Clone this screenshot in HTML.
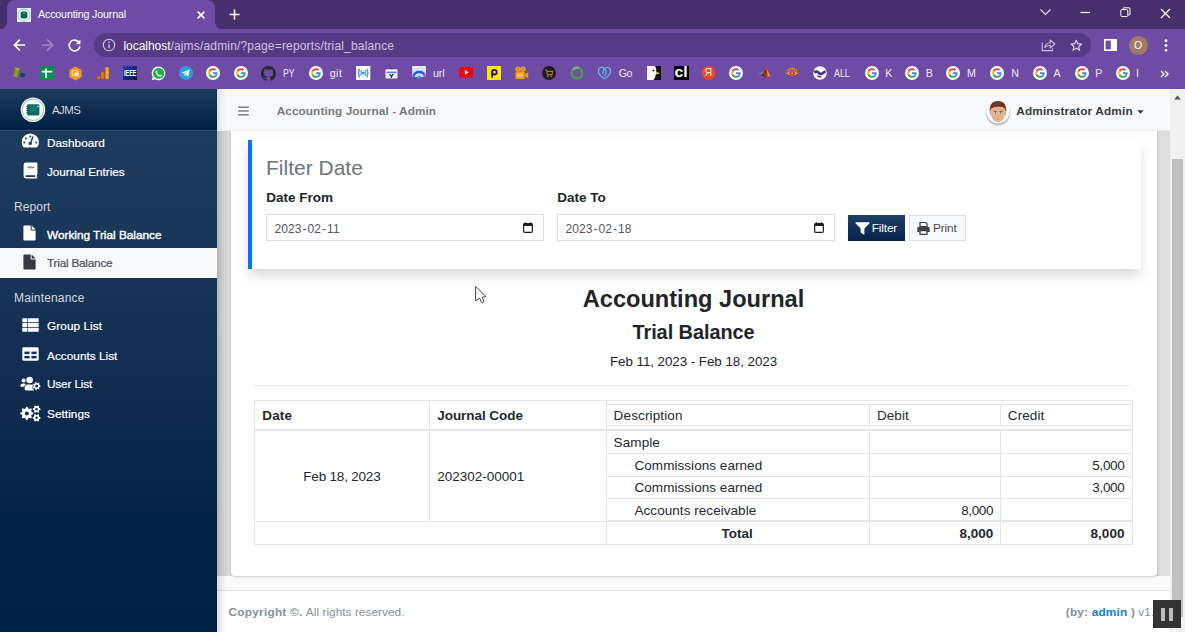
<!DOCTYPE html>
<html lang="en">
<head>
<meta charset="utf-8">
<title>Accounting Journal</title>
<style>
*{box-sizing:border-box;margin:0;padding:0}
html,body{width:1185px;height:632px;overflow:hidden;background:#fff}
body{font-family:"Liberation Sans",sans-serif;position:relative;color:#212529}
.abs{position:absolute}
svg{display:block}
/* ---------- browser chrome ---------- */
#tabstrip{left:0;top:0;width:1185px;height:30px;background:#472e6c}
#tab{left:7px;top:0;width:208px;height:30px;background:#6e4ba5;border-radius:8px 8px 0 0}
#tab:before,#tab:after{content:"";position:absolute;bottom:0;width:8px;height:8px;background:radial-gradient(circle at 0 0,transparent 7.5px,#6e4ba5 8px)}
#tab:before{left:-8px}
#tab:after{right:-8px;background:radial-gradient(circle at 100% 0,transparent 7.5px,#6e4ba5 8px)}
#tabtitle{left:38px;top:7.2px;font-size:10.7px;color:#fff;letter-spacing:-.16px;white-space:nowrap;line-height:15px}
#toolbar{left:0;top:29px;width:1185px;height:60px;background:#6e4ba5}
#pill{left:94px;top:33px;width:997px;height:24px;border-radius:12px;background:#573a85}
#url{left:123.5px;top:38.7px;font-size:12px;line-height:15px;color:#cfc3e6;white-space:nowrap;letter-spacing:-.05px}
#url b{color:#fff;font-weight:400}
.bm{top:65.6px;font-size:10.7px;line-height:15px;color:#f1ecf9;white-space:nowrap;transform-origin:0 50%}
/* ---------- page ---------- */
#sidebar{left:0;top:89px;width:217px;height:543px;background:linear-gradient(180deg,#1f3d5e 0%,#193658 30%,#0d2a4c 62%,#032247 80%,#001f44 100%)}
#brand{left:0;top:89px;width:217px;height:42px;background:linear-gradient(180deg,#1e3c5c 0%,#0e2b4f 55%,#001f45 100%);border-bottom:1px solid #3c526c}
#content{left:217px;top:131px;width:953px;height:445px;background:#dedede}
#navbar{left:217px;top:89px;width:953px;height:42px;background:linear-gradient(90deg,#dcdddf 0,#f1f2f3 5px,#f8f9fa 10px);border-bottom:1px solid #e9ebee;box-shadow:0 1px 2px rgba(0,0,0,.04)}

.sb{left:47px;font-size:11.8px;line-height:16px;color:#fff;white-space:nowrap;-webkit-text-stroke:.2px currentColor}
.sh{left:14px;font-size:12px;line-height:16px;color:#d3d9e0;white-space:nowrap}
#active{left:0;top:248px;width:217px;height:30px;background:#f8f9fa}

#card{left:231px;top:131px;width:926px;height:445px;background:#fff;border-radius:0 0 4px 4px;box-shadow:0 1px 2px rgba(0,0,0,.18)}
#leftshade{left:217px;top:131px;width:14px;height:445px;background:linear-gradient(90deg,#b3b3b5 0%,#c9c9ca 35%,#d6d6d7 70%,#dcdcdc 100%)}
#rightshade{left:1157px;top:131px;width:13px;height:445px;background:linear-gradient(90deg,#d3d3d3 0%,#dedede 22%,#dedede 100%)}
#below{left:217px;top:576px;width:953px;height:14px;background:#fafafb}
#footer{left:217px;top:590px;width:953px;height:42px;background:#fff;border-top:1px solid #e3e5e8}
#callout{left:248px;top:140px;width:893px;height:129px;background:#fff;border-left:4.5px solid #0a72f7;border-radius:0;box-shadow:0 7px 12px -1px rgba(0,0,0,.16)}
.t{white-space:nowrap;line-height:16px}
.inp{top:214px;width:278px;height:27px;border:1px solid #d9dde1;border-radius:0;background:#fff}
.ln{background:#e3e6e9}
.tx{font-size:13.5px;line-height:16px;white-space:nowrap;color:#24292e;margin-left:-.4px}
</style>
</head>
<body>
<!-- CHROME -->
<div id="tabstrip" class="abs"></div>
<div id="toolbar" class="abs"></div>
<div id="tab" class="abs"></div>
<div id="tabtitle" class="abs">Accounting Journal</div>
<div id="pill" class="abs"></div>
<div id="url" class="abs"><b>localhost</b><span style="letter-spacing:.17px">/ajms/admin/?page=reports/trial_balance</span></div>
<!-- favicon -->
<svg class="abs" style="left:17px;top:8px" width="14" height="14" viewBox="0 0 14 14"><rect width="14" height="14" fill="#e9f3f1"/><circle cx="7" cy="7" r="5.9" fill="#fff" stroke="#6dbdb3" stroke-width=".7"/><rect x="3.6" y="3.6" width="6.8" height="6.8" rx="1.6" fill="#0d5f58"/><rect x="5" y="4.6" width="4" height="1" fill="#2fa79a"/></svg>
<!-- tab close -->
<svg class="abs" style="left:196px;top:9.5px" width="10" height="10" viewBox="0 0 10 10"><path d="M1.6 1.6 L8.4 8.4 M8.4 1.6 L1.6 8.4" stroke="#fff" stroke-width="1.5" fill="none"/></svg>
<!-- new tab -->
<svg class="abs" style="left:228.5px;top:9px" width="11" height="11" viewBox="0 0 11 11"><path d="M5.5 .5 V10.5 M.5 5.5 H10.5" stroke="#fff" stroke-width="1.6" fill="none"/></svg>
<!-- window controls -->
<svg class="abs" style="left:1039px;top:7px" width="13" height="10" viewBox="0 0 13 10"><path d="M1.5 2.5 L6.5 7.5 L11.5 2.5" stroke="#e8e0f3" stroke-width="1.1" fill="none"/></svg>
<svg class="abs" style="left:1080px;top:11px" width="11" height="3" viewBox="0 0 11 3"><path d="M.5 1.5 H10" stroke="#fff" stroke-width="1.2"/></svg>
<svg class="abs" style="left:1120px;top:7px" width="11" height="11" viewBox="0 0 11 11"><rect x=".8" y="2.6" width="7" height="7" rx="1.2" fill="none" stroke="#fff" stroke-width="1"/><path d="M3 2.4 V1.8 Q3 .8 4 .8 H9 Q10 .8 10 1.8 V7 Q10 8 9 8 H8.2" fill="none" stroke="#fff" stroke-width="1"/></svg>
<svg class="abs" style="left:1160px;top:7.5px" width="11" height="11" viewBox="0 0 11 11"><path d="M1 1 L10 10 M10 1 L1 10" stroke="#fff" stroke-width="1.2" fill="none"/></svg>
<!-- back / forward / reload -->
<svg class="abs" style="left:13px;top:38px" width="13" height="14" viewBox="0 0 13 14"><path d="M12.2 7 H1.8 M6.8 1.6 L1.4 7 L6.8 12.4" stroke="#fff" stroke-width="1.7" fill="none"/></svg>
<svg class="abs" style="left:41px;top:38px" width="13" height="14" viewBox="0 0 13 14"><path d="M.8 7 H11.2 M6.2 1.6 L11.6 7 L6.2 12.4" stroke="#9f88c9" stroke-width="1.7" fill="none"/></svg>
<svg class="abs" style="left:67px;top:37.5px" width="15" height="15" viewBox="0 0 15 15"><path d="M12.2 4.6 A5.4 5.4 0 1 0 12.9 8.4" stroke="#fff" stroke-width="1.7" fill="none"/><path d="M13.4 1.4 V6.2 H8.6 Z" fill="#fff"/></svg>
<!-- info -->
<svg class="abs" style="left:102px;top:38px" width="14" height="14" viewBox="0 0 14 14"><circle cx="7" cy="7" r="5.7" fill="none" stroke="#d5c9ea" stroke-width="1.1"/><path d="M7 6.2 V10.2" stroke="#d5c9ea" stroke-width="1.3"/><circle cx="7" cy="4.2" r=".8" fill="#d5c9ea"/></svg>
<!-- share -->
<svg class="abs" style="left:1041px;top:38px" width="15" height="14" viewBox="0 0 15 14"><path d="M1.2 4.5 V12.6 H11.6 V10.4" fill="none" stroke="#cbbfe2" stroke-width="1.1"/><path d="M3.8 9.6 Q4.6 5 9.2 4.8 V2 L13.8 6 L9.2 10 V7.2 Q6 7.2 3.8 9.6 Z" fill="none" stroke="#cbbfe2" stroke-width="1.1" stroke-linejoin="round"/></svg>
<!-- star -->
<svg class="abs" style="left:1069.8px;top:38.8px" width="12.6" height="12.6" viewBox="0 0 14 14"><path d="M7 1.3 L8.7 5.2 L12.9 5.6 L9.7 8.4 L10.7 12.6 L7 10.4 L3.3 12.6 L4.3 8.4 L1.1 5.6 L5.3 5.2 Z" fill="none" stroke="#ddd3ee" stroke-width="1.3" stroke-linejoin="round"/></svg>
<!-- side panel -->
<svg class="abs" style="left:1104px;top:39px" width="13" height="12" viewBox="0 0 13 12"><rect x=".8" y=".8" width="11.4" height="10.4" fill="none" stroke="#fff" stroke-width="1.6"/><rect x="6.8" y=".8" width="5.4" height="10.4" fill="#fff"/></svg>
<!-- profile -->
<div class="abs" style="left:1128.5px;top:35.5px;width:19px;height:19px;border-radius:50%;background:#a07b68;color:#fff;font-size:10.5px;line-height:19px;text-align:center">O</div>
<!-- menu -->
<svg class="abs" style="left:1164px;top:39px" width="4" height="13" viewBox="0 0 4 13"><circle cx="2" cy="1.7" r="1.4" fill="#fff"/><circle cx="2" cy="6.5" r="1.4" fill="#fff"/><circle cx="2" cy="11.3" r="1.4" fill="#fff"/></svg>

<svg class="abs" style="left:12px;top:66px" width="15" height="14" viewBox="0 0 15 14"><path d="M3.4 1.4 L7.6 2.4 L5.4 11.6 L1.2 10.6 Z" fill="#8d9d14"/><path d="M3.4 1.4 L7.6 2.4 L7.2 4 L3 3 Z" fill="#a5b722"/><path d="M9.2 6.6 L13.4 7.8 L12.2 11.8 L8 10.6 Z" fill="#104a5a"/></svg>
<svg class="abs" style="left:40px;top:66px" width="14" height="14" viewBox="0 0 14 14"><rect width="14" height="14" rx=".6" fill="#0e8c50"/><path d="M6 2.4 V12 M1.8 5.6 H12.2" stroke="#e9fff3" stroke-width="1.9"/></svg>
<svg class="abs" style="left:68px;top:65.5px" width="15" height="15" viewBox="0 0 15 15"><path d="M7.5 .6 L13.6 4 V11 L7.5 14.4 L1.4 11 V4 Z" fill="#f29a1f"/><rect x="4.2" y="4.6" width="5.6" height="4.8" rx=".8" fill="none" stroke="#fde6c0" stroke-width="1"/><rect x="6.4" y="6.6" width="4.2" height="3.8" rx=".6" fill="#fde6c0"/></svg>
<svg class="abs" style="left:96px;top:66px" width="14" height="14" viewBox="0 0 14 14"><rect x="9.4" y=".8" width="3.4" height="12.4" rx="1.7" fill="#f9ab00"/><rect x="5" y="5.4" width="3.2" height="7.8" rx="1.6" fill="#e37400"/><circle cx="2.6" cy="11.6" r="1.6" fill="#e37400"/></svg>
<svg class="abs" style="left:122.5px;top:66px" width="14.5" height="14" viewBox="0 0 14.5 14"><defs><linearGradient id="ieeeg" x1="0" y1="0" x2="1" y2="1"><stop offset="0" stop-color="#1b43b4"/><stop offset=".55" stop-color="#0d2480"/><stop offset="1" stop-color="#050d48"/></linearGradient></defs><rect width="14.5" height="14" fill="url(#ieeeg)"/><text x="1" y="9.8" font-family="Liberation Sans, sans-serif" font-size="8.6" font-weight="700" fill="#fff" textLength="12.5" lengthAdjust="spacingAndGlyphs">IEEE</text></svg>
<svg class="abs" style="left:150.5px;top:65.5px" width="15" height="15" viewBox="0 0 15 15"><path d="M7.6 .6 A6.8 6.8 0 1 1 4 13.2 L.7 14.3 L1.8 11 A6.8 6.8 0 0 1 7.6 .6 Z" fill="#fff"/><circle cx="7.6" cy="7.4" r="5.6" fill="#1fb141"/><path d="M5.6 4.2 L6.6 6 L6 6.9 Q6.8 8.4 8.4 9.1 L9.2 8.4 L11 9.3 Q10.8 10.8 9.2 10.7 Q5.4 10 4.6 6 Q4.5 4.7 5.6 4.2 Z" fill="#fff"/></svg>
<svg class="abs" style="left:178.5px;top:66px" width="14" height="14" viewBox="0 0 14 14"><circle cx="7" cy="7" r="7" fill="#2aa1de"/><path d="M2.6 6.8 L10.8 3.6 L9.4 10.6 L6.8 8.8 L5.6 10 L5.4 8 L9 5 L4.6 7.6 Z" fill="#fff"/></svg>
<svg class="abs" style="left:206.2px;top:66.2px" width="14" height="14" viewBox="0 0 48 48"><circle cx="24" cy="24" r="24" fill="#fff"/><g transform="translate(7.5 7.5) scale(.6875)"><path fill="#EA4335" d="M24 9.5c3.54 0 6.71 1.22 9.21 3.6l6.85-6.85C35.9 2.38 30.47 0 24 0 14.62 0 6.51 5.38 2.56 13.22l7.98 6.19C12.43 13.72 17.74 9.5 24 9.5z"/><path fill="#4285F4" d="M46.98 24.55c0-1.57-.15-3.09-.38-4.55H24v9.02h12.94c-.58 2.96-2.26 5.48-4.78 7.18l7.73 6c4.51-4.18 7.09-10.36 7.09-17.65z"/><path fill="#FBBC05" d="M10.53 28.59c-.48-1.45-.76-2.99-.76-4.59s.27-3.14.76-4.59l-7.98-6.19C.92 16.46 0 20.12 0 24c0 3.88.92 7.54 2.56 10.78l7.97-6.19z"/><path fill="#34A853" d="M24 48c6.48 0 11.93-2.13 15.89-5.81l-7.73-6c-2.15 1.45-4.92 2.3-8.16 2.3-6.26 0-11.57-4.22-13.47-9.91l-7.98 6.19C6.51 42.62 14.62 48 24 48z"/></g></svg>
<svg class="abs" style="left:233.8px;top:66.2px" width="14" height="14" viewBox="0 0 48 48"><circle cx="24" cy="24" r="24" fill="#fff"/><g transform="translate(7.5 7.5) scale(.6875)"><path fill="#EA4335" d="M24 9.5c3.54 0 6.71 1.22 9.21 3.6l6.85-6.85C35.9 2.38 30.47 0 24 0 14.62 0 6.51 5.38 2.56 13.22l7.98 6.19C12.43 13.72 17.74 9.5 24 9.5z"/><path fill="#4285F4" d="M46.98 24.55c0-1.57-.15-3.09-.38-4.55H24v9.02h12.94c-.58 2.96-2.26 5.48-4.78 7.18l7.73 6c4.51-4.18 7.09-10.36 7.09-17.65z"/><path fill="#FBBC05" d="M10.53 28.59c-.48-1.45-.76-2.99-.76-4.59s.27-3.14.76-4.59l-7.98-6.19C.92 16.46 0 20.12 0 24c0 3.88.92 7.54 2.56 10.78l7.97-6.19z"/><path fill="#34A853" d="M24 48c6.48 0 11.93-2.13 15.89-5.81l-7.73-6c-2.15 1.45-4.92 2.3-8.16 2.3-6.26 0-11.57-4.22-13.47-9.91l-7.98 6.19C6.51 42.62 14.62 48 24 48z"/></g></svg>
<svg class="abs" style="left:261px;top:65.5px" width="15" height="15" viewBox="0 0 16 16"><path fill="#24292e" d="M8 0C3.58 0 0 3.58 0 8c0 3.54 2.29 6.53 5.47 7.59.4.07.55-.17.55-.38 0-.19-.01-.82-.01-1.49-2.01.37-2.53-.49-2.69-.94-.09-.23-.48-.94-.82-1.13-.28-.15-.68-.52-.01-.53.63-.01 1.08.58 1.23.82.72 1.21 1.87.87 2.33.66.07-.52.28-.87.51-1.07-1.78-.2-3.64-.89-3.64-3.95 0-.87.31-1.59.82-2.15-.08-.2-.36-1.02.08-2.12 0 0 .67-.21 2.2.82.64-.18 1.32-.27 2-.27s1.36.09 2 .27c1.53-1.04 2.2-.82 2.2-.82.44 1.1.16 1.92.08 2.12.51.56.82 1.27.82 2.15 0 3.07-1.87 3.75-3.65 3.95.29.25.54.73.54 1.48 0 1.07-.01 1.93-.01 2.2 0 .21.15.46.55.38A8.01 8.01 0 0 0 16 8c0-4.42-3.58-8-8-8z"/></svg>
<div class="bm abs" style="left:283px;transform:scaleX(.81)">PY</div>
<svg class="abs" style="left:308.8px;top:66.2px" width="14" height="14" viewBox="0 0 48 48"><circle cx="24" cy="24" r="24" fill="#fff"/><g transform="translate(7.5 7.5) scale(.6875)"><path fill="#EA4335" d="M24 9.5c3.54 0 6.71 1.22 9.21 3.6l6.85-6.85C35.9 2.38 30.47 0 24 0 14.62 0 6.51 5.38 2.56 13.22l7.98 6.19C12.43 13.72 17.74 9.5 24 9.5z"/><path fill="#4285F4" d="M46.98 24.55c0-1.57-.15-3.09-.38-4.55H24v9.02h12.94c-.58 2.96-2.26 5.48-4.78 7.18l7.73 6c4.51-4.18 7.09-10.36 7.09-17.65z"/><path fill="#FBBC05" d="M10.53 28.59c-.48-1.45-.76-2.99-.76-4.59s.27-3.14.76-4.59l-7.98-6.19C.92 16.46 0 20.12 0 24c0 3.88.92 7.54 2.56 10.78l7.97-6.19z"/><path fill="#34A853" d="M24 48c6.48 0 11.93-2.13 15.89-5.81l-7.73-6c-2.15 1.45-4.92 2.3-8.16 2.3-6.26 0-11.57-4.22-13.47-9.91l-7.98 6.19C6.51 42.62 14.62 48 24 48z"/></g></svg>
<div class="bm abs" style="left:329.7px;letter-spacing:.45px">git</div>
<svg class="abs" style="left:356.3px;top:65.9px" width="14.4" height="14.2" viewBox="0 0 14 14"><rect width="14" height="14" fill="#fff"/><path d="M3.2 2.6 Q1.6 7 3.2 11.4 M10.8 2.6 Q12.4 7 10.8 11.4" fill="none" stroke="#3f9be6" stroke-width="1.5"/><path d="M4.9 4 V10 M9.1 4 V10" stroke="#3f9be6" stroke-width="1.1"/><rect x="5.6" y="5.6" width="2.8" height="2.8" rx=".8" fill="#3f9be6"/></svg>
<svg class="abs" style="left:385px;top:67.6px" width="13" height="11" viewBox="0 0 13 11"><rect x="4.8" y="0" width="3" height="1.6" rx=".5" fill="#3a3550"/><rect x=".5" y="1.2" width="12" height="9.4" rx="1" fill="#f6f4fb"/><rect x="1.6" y="3.6" width="9.8" height="1.5" fill="#4f7de0"/><path d="M4 6 H5.6 L6.5 7.6 L7.4 6 H9 L7.2 8.6 V10 H5.8 V8.6 Z" fill="#2c2a3a"/></svg>
<svg class="abs" style="left:412px;top:65.8px" width="14.5" height="13" viewBox="0 0 14.5 13"><rect x=".2" y=".2" width="13.8" height="10.8" rx=".8" fill="#d9e4fb"/><rect x=".2" y=".2" width="13.8" height="1.6" fill="#eef3fd"/><path d="M1.4 10.8 A5.9 5.9 0 0 1 13 10.8" fill="none" stroke="#1f5cf0" stroke-width="2.3"/><path d="M12 7.8 A5.9 5.9 0 0 1 13 10.8" fill="none" stroke="#c04de0" stroke-width="2.3"/><circle cx="7.2" cy="11.2" r="1.7" fill="#3a8cff"/></svg>
<div class="bm abs" style="left:433px;letter-spacing:-.1px">url</div>
<svg class="abs" style="left:458.6px;top:67px" width="14.6" height="10.6" viewBox="0 0 15 11"><rect width="15" height="11" rx="3" fill="#f00"/><path d="M6 3 L10 5.5 L6 8 Z" fill="#fff"/></svg>
<svg class="abs" style="left:487px;top:66px" width="14" height="14" viewBox="0 0 14 14"><rect width="14" height="14" fill="#ffe600"/><circle cx="7.4" cy="6.2" r="2.3" fill="none" stroke="#111" stroke-width="1.7"/><path d="M5.2 5 V11.6" stroke="#111" stroke-width="1.7"/></svg>
<svg class="abs" style="left:514px;top:66px" width="15" height="14" viewBox="0 0 15 14"><circle cx="4" cy="3.2" r="2" fill="#c98a3a" stroke="#f5a623" stroke-width="1.2"/><circle cx="9" cy="3.2" r="2" fill="#c98a3a" stroke="#f5a623" stroke-width="1.2"/><rect x="1.4" y="5.6" width="9.4" height="7.4" rx="1" fill="#f39c12"/><path d="M10.8 8.4 L14.2 6.2 V12.2 L10.8 10.2 Z" fill="#f39c12"/><rect x="3" y="7.6" width="6" height="3.2" fill="#f7c36a"/></svg>
<svg class="abs" style="left:541.5px;top:66px" width="14" height="14" viewBox="0 0 14 14"><circle cx="7" cy="7" r="7" fill="#1f1d1d"/><path d="M3 4 H4.4 L5.4 8.6 H10 L10.8 5.4 H5" fill="none" stroke="#a9793d" stroke-width="1.1"/><circle cx="6" cy="10.4" r=".9" fill="#a9793d"/><circle cx="9.4" cy="10.4" r=".9" fill="#a9793d"/></svg>
<svg class="abs" style="left:570px;top:66px" width="14" height="14" viewBox="0 0 14 14"><circle cx="7" cy="7" r="5.4" fill="#74509f" stroke="#43a052" stroke-width="2.3"/><path d="M3 3.4 A5.4 5.4 0 0 1 9 1.9" fill="none" stroke="#6dbb7a" stroke-width="2.3"/></svg>
<svg class="abs" style="left:597px;top:66px" width="15" height="14" viewBox="0 0 15 14"><path d="M7.4 12.8 Q.8 8.6 1.4 4.4 Q2 1.2 5.2 1.4 Q8.2 2 9 5.6 Q9.4 8.6 7.4 10" fill="none" stroke="#5cbcea" stroke-width="1.3"/><path d="M7.4 12.8 Q14.2 8.6 13.6 4.4 Q13 1.2 9.8 1.4 Q7.2 2 6.2 4.6 Q5.6 6.6 6.4 8" fill="none" stroke="#5cbcea" stroke-width="1.3"/></svg>
<div class="bm abs" style="left:618.7px;letter-spacing:-.5px">Go</div>
<svg class="abs" style="left:646.5px;top:66px" width="14" height="14" viewBox="0 0 14 14"><rect width="14" height="14" fill="#111"/><path d="M0 0 H8 Q10 3 9 5.6 L12.6 7.6 L8.6 8.6 Q9 11.6 6.6 14 H0 Z" fill="#fff"/><path d="M9 5.6 L13 7.4 L9 8.2 Z" fill="#f0a21b"/><circle cx="6.4" cy="4.6" r=".9" fill="#111"/></svg>
<div class="abs" style="left:674px;top:66px;width:14.5px;height:14px;background:#050505;overflow:hidden"><span style="display:block;width:20px;margin-left:-2.75px;color:#fff;font-size:15.5px;line-height:12.5px;font-weight:700;text-align:center;transform:scaleX(1.02)">cl</span></div>
<div class="abs" style="left:701.6px;top:66.3px;width:13.6px;height:13.6px;border-radius:50%;background:#f5451f;color:#fff;font-size:10.5px;line-height:13.6px;text-align:center">Я</div>
<svg class="abs" style="left:729.4px;top:66.2px" width="14" height="14" viewBox="0 0 48 48"><circle cx="24" cy="24" r="24" fill="#fff"/><g transform="translate(7.5 7.5) scale(.6875)"><path fill="#EA4335" d="M24 9.5c3.54 0 6.71 1.22 9.21 3.6l6.85-6.85C35.9 2.38 30.47 0 24 0 14.62 0 6.51 5.38 2.56 13.22l7.98 6.19C12.43 13.72 17.74 9.5 24 9.5z"/><path fill="#4285F4" d="M46.98 24.55c0-1.57-.15-3.09-.38-4.55H24v9.02h12.94c-.58 2.96-2.26 5.48-4.78 7.18l7.73 6c4.51-4.18 7.09-10.36 7.09-17.65z"/><path fill="#FBBC05" d="M10.53 28.59c-.48-1.45-.76-2.99-.76-4.59s.27-3.14.76-4.59l-7.98-6.19C.92 16.46 0 20.12 0 24c0 3.88.92 7.54 2.56 10.78l7.97-6.19z"/><path fill="#34A853" d="M24 48c6.48 0 11.93-2.13 15.89-5.81l-7.73-6c-2.15 1.45-4.92 2.3-8.16 2.3-6.26 0-11.57-4.22-13.47-9.91l-7.98 6.19C6.51 42.62 14.62 48 24 48z"/></g></svg>
<svg class="abs" style="left:757.6px;top:67.2px" width="13" height="11.2" viewBox="0 0 13 11.2"><path d="M.4 6.4 L4 4.8 L5.6 6.2 L3 8 Z" fill="#3f8bd6"/><path d="M4 4.8 Q6.4 3.2 8.2 .3 Q9.4 3.4 12.4 10 Q10.4 8.8 8.2 10.9 Q7 9 5.6 6.2 Z" fill="#b8431a"/><path d="M8.2 .3 Q9.4 3.4 12.4 10 Q10.8 9 9.6 9.4 Q9.4 4.6 8.2 .3 Z" fill="#f49b28"/><path d="M5.6 6.2 Q7 9 8.2 10.9 Q6.6 9.6 3 8 Z" fill="#5e2410"/><path d="M6.2 4.6 Q7.6 3.4 8.2 1.6 Q8.6 5 8.6 8.8 Q7.4 7.4 6.2 4.6 Z" fill="#3a1a10" opacity=".55"/></svg>
<svg class="abs" style="left:784.8px;top:67px" width="14.4" height="10.6" viewBox="0 0 15 11"><path d="M2.4 2.6 L3.8 4.6 M5 .8 L5.8 3.4 M7.5 .2 V3 M10 .8 L9.2 3.4 M12.6 2.6 L11.2 4.6" stroke="#f0851c" stroke-width="1.5"/><path d="M.5 6.6 Q7.5 1.2 14.5 6.6 Q7.5 11.6 .5 6.6 Z" fill="#f28c1e"/><ellipse cx="7.5" cy="6.5" rx="2.7" ry="2.2" fill="#b33a12"/><circle cx="7.5" cy="6.5" r="1" fill="#f7b04a"/></svg>
<svg class="abs" style="left:812.7px;top:66.2px" width="14" height="14" viewBox="0 0 14 14"><circle cx="7" cy="7" r="6.8" fill="#fff"/><path d="M1.2 6.6 Q3.6 4.6 5.6 6.6 Q7.2 8.6 9.2 7.6 Q10.6 6 12.6 5.4" fill="none" stroke="#4b3386" stroke-width="2.6"/><path d="M4.6 9.6 Q6 11.4 8.4 10.4" fill="none" stroke="#4b3386" stroke-width="1.6"/></svg>
<div class="bm abs" style="left:834px;transform:scaleX(.83)">ALL</div>
<svg class="abs" style="left:864.8px;top:66.2px" width="14" height="14" viewBox="0 0 48 48"><circle cx="24" cy="24" r="24" fill="#fff"/><g transform="translate(7.5 7.5) scale(.6875)"><path fill="#EA4335" d="M24 9.5c3.54 0 6.71 1.22 9.21 3.6l6.85-6.85C35.9 2.38 30.47 0 24 0 14.62 0 6.51 5.38 2.56 13.22l7.98 6.19C12.43 13.72 17.74 9.5 24 9.5z"/><path fill="#4285F4" d="M46.98 24.55c0-1.57-.15-3.09-.38-4.55H24v9.02h12.94c-.58 2.96-2.26 5.48-4.78 7.18l7.73 6c4.51-4.18 7.09-10.36 7.09-17.65z"/><path fill="#FBBC05" d="M10.53 28.59c-.48-1.45-.76-2.99-.76-4.59s.27-3.14.76-4.59l-7.98-6.19C.92 16.46 0 20.12 0 24c0 3.88.92 7.54 2.56 10.78l7.97-6.19z"/><path fill="#34A853" d="M24 48c6.48 0 11.93-2.13 15.89-5.81l-7.73-6c-2.15 1.45-4.92 2.3-8.16 2.3-6.26 0-11.57-4.22-13.47-9.91l-7.98 6.19C6.51 42.62 14.62 48 24 48z"/></g></svg>
<div class="bm abs" style="left:885.3px;letter-spacing:0px">K</div>
<svg class="abs" style="left:905.3px;top:66.2px" width="14" height="14" viewBox="0 0 48 48"><circle cx="24" cy="24" r="24" fill="#fff"/><g transform="translate(7.5 7.5) scale(.6875)"><path fill="#EA4335" d="M24 9.5c3.54 0 6.71 1.22 9.21 3.6l6.85-6.85C35.9 2.38 30.47 0 24 0 14.62 0 6.51 5.38 2.56 13.22l7.98 6.19C12.43 13.72 17.74 9.5 24 9.5z"/><path fill="#4285F4" d="M46.98 24.55c0-1.57-.15-3.09-.38-4.55H24v9.02h12.94c-.58 2.96-2.26 5.48-4.78 7.18l7.73 6c4.51-4.18 7.09-10.36 7.09-17.65z"/><path fill="#FBBC05" d="M10.53 28.59c-.48-1.45-.76-2.99-.76-4.59s.27-3.14.76-4.59l-7.98-6.19C.92 16.46 0 20.12 0 24c0 3.88.92 7.54 2.56 10.78l7.97-6.19z"/><path fill="#34A853" d="M24 48c6.48 0 11.93-2.13 15.89-5.81l-7.73-6c-2.15 1.45-4.92 2.3-8.16 2.3-6.26 0-11.57-4.22-13.47-9.91l-7.98 6.19C6.51 42.62 14.62 48 24 48z"/></g></svg>
<div class="bm abs" style="left:925.8px;letter-spacing:0px">B</div>
<svg class="abs" style="left:946.4px;top:66.2px" width="14" height="14" viewBox="0 0 48 48"><circle cx="24" cy="24" r="24" fill="#fff"/><g transform="translate(7.5 7.5) scale(.6875)"><path fill="#EA4335" d="M24 9.5c3.54 0 6.71 1.22 9.21 3.6l6.85-6.85C35.9 2.38 30.47 0 24 0 14.62 0 6.51 5.38 2.56 13.22l7.98 6.19C12.43 13.72 17.74 9.5 24 9.5z"/><path fill="#4285F4" d="M46.98 24.55c0-1.57-.15-3.09-.38-4.55H24v9.02h12.94c-.58 2.96-2.26 5.48-4.78 7.18l7.73 6c4.51-4.18 7.09-10.36 7.09-17.65z"/><path fill="#FBBC05" d="M10.53 28.59c-.48-1.45-.76-2.99-.76-4.59s.27-3.14.76-4.59l-7.98-6.19C.92 16.46 0 20.12 0 24c0 3.88.92 7.54 2.56 10.78l7.97-6.19z"/><path fill="#34A853" d="M24 48c6.48 0 11.93-2.13 15.89-5.81l-7.73-6c-2.15 1.45-4.92 2.3-8.16 2.3-6.26 0-11.57-4.22-13.47-9.91l-7.98 6.19C6.51 42.62 14.62 48 24 48z"/></g></svg>
<div class="bm abs" style="left:967px;letter-spacing:0px">M</div>
<svg class="abs" style="left:990.2px;top:66.2px" width="14" height="14" viewBox="0 0 48 48"><circle cx="24" cy="24" r="24" fill="#fff"/><g transform="translate(7.5 7.5) scale(.6875)"><path fill="#EA4335" d="M24 9.5c3.54 0 6.71 1.22 9.21 3.6l6.85-6.85C35.9 2.38 30.47 0 24 0 14.62 0 6.51 5.38 2.56 13.22l7.98 6.19C12.43 13.72 17.74 9.5 24 9.5z"/><path fill="#4285F4" d="M46.98 24.55c0-1.57-.15-3.09-.38-4.55H24v9.02h12.94c-.58 2.96-2.26 5.48-4.78 7.18l7.73 6c4.51-4.18 7.09-10.36 7.09-17.65z"/><path fill="#FBBC05" d="M10.53 28.59c-.48-1.45-.76-2.99-.76-4.59s.27-3.14.76-4.59l-7.98-6.19C.92 16.46 0 20.12 0 24c0 3.88.92 7.54 2.56 10.78l7.97-6.19z"/><path fill="#34A853" d="M24 48c6.48 0 11.93-2.13 15.89-5.81l-7.73-6c-2.15 1.45-4.92 2.3-8.16 2.3-6.26 0-11.57-4.22-13.47-9.91l-7.98 6.19C6.51 42.62 14.62 48 24 48z"/></g></svg>
<div class="bm abs" style="left:1011.3px;letter-spacing:0px">N</div>
<svg class="abs" style="left:1033.0px;top:66.2px" width="14" height="14" viewBox="0 0 48 48"><circle cx="24" cy="24" r="24" fill="#fff"/><g transform="translate(7.5 7.5) scale(.6875)"><path fill="#EA4335" d="M24 9.5c3.54 0 6.71 1.22 9.21 3.6l6.85-6.85C35.9 2.38 30.47 0 24 0 14.62 0 6.51 5.38 2.56 13.22l7.98 6.19C12.43 13.72 17.74 9.5 24 9.5z"/><path fill="#4285F4" d="M46.98 24.55c0-1.57-.15-3.09-.38-4.55H24v9.02h12.94c-.58 2.96-2.26 5.48-4.78 7.18l7.73 6c4.51-4.18 7.09-10.36 7.09-17.65z"/><path fill="#FBBC05" d="M10.53 28.59c-.48-1.45-.76-2.99-.76-4.59s.27-3.14.76-4.59l-7.98-6.19C.92 16.46 0 20.12 0 24c0 3.88.92 7.54 2.56 10.78l7.97-6.19z"/><path fill="#34A853" d="M24 48c6.48 0 11.93-2.13 15.89-5.81l-7.73-6c-2.15 1.45-4.92 2.3-8.16 2.3-6.26 0-11.57-4.22-13.47-9.91l-7.98 6.19C6.51 42.62 14.62 48 24 48z"/></g></svg>
<div class="bm abs" style="left:1053.5px;letter-spacing:0px">A</div>
<svg class="abs" style="left:1074.5px;top:66.2px" width="14" height="14" viewBox="0 0 48 48"><circle cx="24" cy="24" r="24" fill="#fff"/><g transform="translate(7.5 7.5) scale(.6875)"><path fill="#EA4335" d="M24 9.5c3.54 0 6.71 1.22 9.21 3.6l6.85-6.85C35.9 2.38 30.47 0 24 0 14.62 0 6.51 5.38 2.56 13.22l7.98 6.19C12.43 13.72 17.74 9.5 24 9.5z"/><path fill="#4285F4" d="M46.98 24.55c0-1.57-.15-3.09-.38-4.55H24v9.02h12.94c-.58 2.96-2.26 5.48-4.78 7.18l7.73 6c4.51-4.18 7.09-10.36 7.09-17.65z"/><path fill="#FBBC05" d="M10.53 28.59c-.48-1.45-.76-2.99-.76-4.59s.27-3.14.76-4.59l-7.98-6.19C.92 16.46 0 20.12 0 24c0 3.88.92 7.54 2.56 10.78l7.97-6.19z"/><path fill="#34A853" d="M24 48c6.48 0 11.93-2.13 15.89-5.81l-7.73-6c-2.15 1.45-4.92 2.3-8.16 2.3-6.26 0-11.57-4.22-13.47-9.91l-7.98 6.19C6.51 42.62 14.62 48 24 48z"/></g></svg>
<div class="bm abs" style="left:1095.2px;letter-spacing:0px">P</div>
<svg class="abs" style="left:1115.5px;top:66.2px" width="14" height="14" viewBox="0 0 48 48"><circle cx="24" cy="24" r="24" fill="#fff"/><g transform="translate(7.5 7.5) scale(.6875)"><path fill="#EA4335" d="M24 9.5c3.54 0 6.71 1.22 9.21 3.6l6.85-6.85C35.9 2.38 30.47 0 24 0 14.62 0 6.51 5.38 2.56 13.22l7.98 6.19C12.43 13.72 17.74 9.5 24 9.5z"/><path fill="#4285F4" d="M46.98 24.55c0-1.57-.15-3.09-.38-4.55H24v9.02h12.94c-.58 2.96-2.26 5.48-4.78 7.18l7.73 6c4.51-4.18 7.09-10.36 7.09-17.65z"/><path fill="#FBBC05" d="M10.53 28.59c-.48-1.45-.76-2.99-.76-4.59s.27-3.14.76-4.59l-7.98-6.19C.92 16.46 0 20.12 0 24c0 3.88.92 7.54 2.56 10.78l7.97-6.19z"/><path fill="#34A853" d="M24 48c6.48 0 11.93-2.13 15.89-5.81l-7.73-6c-2.15 1.45-4.92 2.3-8.16 2.3-6.26 0-11.57-4.22-13.47-9.91l-7.98 6.19C6.51 42.62 14.62 48 24 48z"/></g></svg>
<div class="bm abs" style="left:1136px;letter-spacing:0px">I</div>
<svg class="abs" style="left:1160px;top:69.5px" width="9" height="8" viewBox="0 0 9 8"><path d="M1 1 L4 4 L1 7 M5 1 L8 4 L5 7" fill="none" stroke="#fff" stroke-width="1.3"/></svg>

<!-- PAGE -->
<div id="sidebar" class="abs"></div>
<div id="brand" class="abs"></div>
<div id="content" class="abs"></div>
<div id="navbar" class="abs"></div>
<svg class="abs" style="left:18.5px;top:96px" width="28" height="28" viewBox="0 0 28 28"><circle cx="14" cy="14.6" r="12.6" fill="#000" opacity=".25"/><circle cx="14" cy="13.8" r="12.3" fill="#f4fbf9"/><circle cx="14" cy="13.8" r="10.7" fill="#fff" stroke="#58b3a8" stroke-width=".7"/><path d="M8.2 9.4 Q8.2 8.2 9.4 8.2 H19 Q20.4 8.2 20.4 9.6 V18 Q20.4 19.4 19 19.4 H9.4 Q8.2 19.4 8.2 18.2 Z" fill="#0f6b62"/><path d="M7.4 10.2 H9.6 M7.4 12.4 H9.6 M7.4 14.6 H9.6 M7.4 16.8 H9.6" stroke="#0a4d47" stroke-width="1"/><path d="M10.8 10.4 H17.4 M10.8 12.4 H18 M10.8 14.4 H16.4" stroke="#1f8f82" stroke-width=".8"/><circle cx="19" cy="10.4" r="1" fill="#7fd0ff"/></svg>
<div class="abs" style="left:52px;top:101.6px;font-size:11.4px;line-height:16px;color:#d3d9e1;letter-spacing:-.5px;white-space:nowrap">AJMS</div>
<div id="active" class="abs"></div>
<div class="sb abs" style="top:134.5px;letter-spacing:0.02px">Dashboard</div>
<div class="sb abs" style="top:163.6px;letter-spacing:-0.08px">Journal Entries</div>
<div class="sh abs" style="top:198.8px;letter-spacing:0.08px">Report</div>
<div class="sb abs" style="top:226.5px;letter-spacing:0px;-webkit-text-stroke:.4px #fff">Working Trial Balance</div>
<div class="sb abs" style="top:255.2px;letter-spacing:-0.23px;color:#495057">Trial Balance</div>
<div class="sh abs" style="top:289.6px;letter-spacing:0.16px">Maintenance</div>
<div class="sb abs" style="top:317.9px;letter-spacing:0.07px">Group List</div>
<div class="sb abs" style="top:347.5px;letter-spacing:0.02px">Accounts List</div>
<div class="sb abs" style="top:376.2px;letter-spacing:-0.15px">User List</div>
<div class="sb abs" style="top:405.7px;letter-spacing:0.04px">Settings</div>
<svg class="abs" style="left:20.6px;top:133.4px" width="18.6" height="15" viewBox="0 0 18 15"><path d="M9 .6 A8.6 8.6 0 0 1 17.6 9.2 Q17.6 11.8 16.4 13.6 Q16 14.4 15.2 14.4 H2.8 Q2 14.4 1.6 13.6 Q.4 11.8 .4 9.2 A8.6 8.6 0 0 1 9 .6 Z" fill="#fff"/><circle cx="9" cy="3.4" r="1" fill="#1d3b5b"/><circle cx="4.6" cy="5.4" r="1" fill="#1d3b5b"/><circle cx="3" cy="9.6" r="1" fill="#1d3b5b"/><circle cx="15" cy="9.6" r="1" fill="#1d3b5b"/><path d="M11.6 3.6 L9.6 9.4" stroke="#1d3b5b" stroke-width="1.4"/><circle cx="9" cy="10.4" r="1.7" fill="#1d3b5b"/></svg>
<svg class="abs" style="left:22.5px;top:162px" width="15" height="17" viewBox="0 0 15 17"><path d="M3 .6 H13.4 Q14.4 .6 14.4 1.6 V12 Q14.4 12.8 13.8 13 V15 Q14.4 15.2 14.4 15.8 Q14.4 16.4 13.6 16.4 H3 Q.6 16.4 .6 14 V3 Q.6 .6 3 .6 Z" fill="#fff"/><rect x="4.4" y="4.4" width="7" height="1.8" rx=".3" fill="#1b385a" opacity=".55"/><path d="M3.2 13.2 H12 V15 H3.2 Q2.4 15 2.4 14.1 Q2.4 13.2 3.2 13.2 Z" fill="#1b385a"/></svg>
<svg class="abs" style="left:23.3px;top:225.2px" width="13" height="16" viewBox="0 0 13 16"><path d="M1.4 .4 H7.6 V4.6 Q7.6 5.4 8.4 5.4 H12.6 V14.6 Q12.6 15.6 11.6 15.6 H1.4 Q.4 15.6 .4 14.6 V1.4 Q.4 .4 1.4 .4 Z" fill="#fff"/><path d="M8.6 .4 L12.6 4.4 H8.6 Z" fill="#fff"/></svg>
<svg class="abs" style="left:23.3px;top:253.7px" width="13" height="16" viewBox="0 0 13 16"><path d="M1.4 .4 H7.6 V4.6 Q7.6 5.4 8.4 5.4 H12.6 V14.6 Q12.6 15.6 11.6 15.6 H1.4 Q.4 15.6 .4 14.6 V1.4 Q.4 .4 1.4 .4 Z" fill="#343a40"/><path d="M8.6 .4 L12.6 4.4 H8.6 Z" fill="#343a40"/></svg>
<svg class="abs" style="left:21.5px;top:318px" width="17" height="14" viewBox="0 0 17 14"><g fill="#fff"><rect x=".3" y=".3" width="4.9" height="4" rx=".5"/><rect x="5.8" y=".3" width="10.9" height="4" rx=".5"/><rect x=".3" y="5" width="4.9" height="4" rx=".5"/><rect x="5.8" y="5" width="10.9" height="4" rx=".5"/><rect x=".3" y="9.7" width="4.9" height="4" rx=".5"/><rect x="5.8" y="9.7" width="10.9" height="4" rx=".5"/></g></svg>
<svg class="abs" style="left:21.5px;top:347px" width="17" height="14" viewBox="0 0 17 14"><rect x=".3" y=".3" width="16.4" height="13.4" rx="1.4" fill="#fff"/><g fill="#143255"><rect x="2.4" y="4.6" width="5.2" height="2.5"/><rect x="9.4" y="4.6" width="5.2" height="2.5"/><rect x="2.4" y="8.9" width="5.2" height="2.5"/><rect x="9.4" y="8.9" width="5.2" height="2.5"/></g></svg>
<svg class="abs" style="left:20px;top:376px" width="21" height="15" viewBox="0 0 21 15"><g fill="#fff"><circle cx="3.6" cy="4.6" r="2"/><path d="M.4 10 Q.4 7.4 3 7.4 H4.4 Q5.4 7.4 6 8 Q4.4 9 4.2 10.8 H1.2 Q.4 10.8 .4 10 Z"/><circle cx="9.6" cy="4" r="3.3"/><path d="M4.6 12.8 Q4.6 8.4 8 8.4 H11.2 Q12.4 8.4 13.2 9 Q12.4 10.6 13 12.4 Q13.4 13.6 14.2 14.4 H6 Q4.6 14.4 4.6 12.8 Z"/><polygon points="21.07,9.50 21.07,10.50 19.71,11.09 19.39,11.76 19.78,13.18 18.99,13.81 17.69,13.11 16.97,13.28 16.10,14.47 15.11,14.25 14.84,12.79 14.27,12.33 12.79,12.39 12.35,11.49 13.32,10.37 13.32,9.63 12.35,8.51 12.79,7.61 14.27,7.67 14.84,7.21 15.11,5.75 16.10,5.53 16.97,6.72 17.69,6.89 18.99,6.19 19.78,6.82 19.39,8.24 19.71,8.91" stroke="#123053" stroke-width=".7"/></g><circle cx="16.6" cy="10" r="1.5" fill="#123053"/></svg>
<svg class="abs" style="left:20px;top:405px" width="21" height="17" viewBox="0 0 21 17"><polygon points="13.37,7.75 13.37,9.05 11.58,9.85 11.21,10.76 11.90,12.59 10.99,13.50 9.16,12.81 8.25,13.18 7.45,14.97 6.15,14.97 5.35,13.18 4.44,12.81 2.61,13.50 1.70,12.59 2.39,10.76 2.02,9.85 0.23,9.05 0.23,7.75 2.02,6.95 2.39,6.04 1.70,4.21 2.61,3.30 4.44,3.99 5.35,3.62 6.15,1.83 7.45,1.83 8.25,3.62 9.16,3.99 10.99,3.30 11.90,4.21 11.21,6.04 11.58,6.95" fill="#fff"/><circle cx="6.8" cy="8.4" r="2" fill="#0f2d51"/><polygon points="20.57,3.68 20.57,4.72 19.28,5.31 18.90,5.97 19.04,7.37 18.13,7.90 16.98,7.08 16.22,7.08 15.07,7.90 14.16,7.37 14.30,5.97 13.92,5.31 12.63,4.72 12.63,3.68 13.92,3.09 14.30,2.43 14.16,1.03 15.07,0.50 16.22,1.32 16.98,1.32 18.13,0.50 19.04,1.03 18.90,2.43 19.28,3.09" fill="#fff"/><circle cx="16.6" cy="4.2" r="1.2" fill="#0f2d51"/><polygon points="20.57,12.28 20.57,13.32 19.28,13.91 18.90,14.57 19.04,15.97 18.13,16.50 16.98,15.68 16.22,15.68 15.07,16.50 14.16,15.97 14.30,14.57 13.92,13.91 12.63,13.32 12.63,12.28 13.92,11.69 14.30,11.03 14.16,9.63 15.07,9.10 16.22,9.92 16.98,9.92 18.13,9.10 19.04,9.63 18.90,11.03 19.28,11.69" fill="#fff"/><circle cx="16.6" cy="12.8" r="1.2" fill="#0f2d51"/></svg>

<svg class="abs" style="left:237.5px;top:106px" width="11" height="10" viewBox="0 0 11 10"><path d="M.2 1.2 H10.8 M.2 5 H10.8 M.2 8.8 H10.8" stroke="#7c7f82" stroke-width="1.5"/></svg>
<div class="abs t" style="left:276.7px;top:103.3px;font-size:11.8px;font-weight:700;color:#777b80;letter-spacing:.075px">Accounting Journal - Admin</div>
<svg class="abs" style="left:983px;top:97px" width="30" height="31" viewBox="0 0 30 31"><defs><clipPath id="avc"><circle cx="15" cy="14.6" r="11.7"/></clipPath></defs><circle cx="15" cy="16.6" r="12.4" fill="#000" opacity=".13"/><circle cx="15" cy="15.6" r="12.1" fill="#000" opacity=".12"/><circle cx="15" cy="14.6" r="11.7" fill="#fff"/><g clip-path="url(#avc)"><path d="M6.9 16 Q5.6 4.2 15 4 Q24.4 4.2 23.1 16 L21.8 11.6 Q15 8 8.2 11.6 Z" fill="#6e3621"/><path d="M8.1 11.4 Q11 8.6 17 9.4 Q20.4 9.4 21.9 11.4 Q22.6 19.4 19.8 23 Q15 27.4 10.2 23 Q7.4 19.4 8.1 11.4 Z" fill="#e4b392"/><path d="M8.1 11.6 Q9.4 8 15.6 8.2 Q20.4 8 21.9 11.6 Q20 9.2 15 9.6 Q10.6 10 8.1 11.6 Z" fill="#6e3621"/><path d="M10.6 14 L13.6 14.8 M19.4 14 L16.4 14.8" stroke="#6a452c" stroke-width=".9"/><ellipse cx="12.3" cy="15.9" rx="1.3" ry=".8" fill="#f6efe6"/><ellipse cx="17.7" cy="15.9" rx="1.3" ry=".8" fill="#f6efe6"/><circle cx="12.4" cy="15.9" r=".7" fill="#3b2a1c"/><circle cx="17.6" cy="15.9" r=".7" fill="#3b2a1c"/><path d="M14.4 19.4 Q15 19.9 15.6 19.4" stroke="#d79b7f" stroke-width=".8" fill="none"/><path d="M13.4 22 H16.6" stroke="#cf927a" stroke-width=".6"/><path d="M7.6 15 Q6.8 17 8.2 18.4 M22.4 15 Q23.2 17 21.8 18.4" stroke="#dba988" stroke-width="1.2" fill="none"/></g></svg>
<div class="abs t" style="left:1016.2px;top:103.3px;font-size:11.8px;font-weight:700;color:#343a40;letter-spacing:.17px">Adminstrator Admin</div>
<svg class="abs" style="left:1136.5px;top:109.5px" width="7" height="4" viewBox="0 0 7 4"><path d="M.3 .2 H6.7 L3.5 3.8 Z" fill="#343a40"/></svg>

<div id="leftshade" class="abs"></div><div id="rightshade" class="abs"></div><div id="below" class="abs"></div>
<div id="card" class="abs"></div>
<div id="callout" class="abs"></div>
<div class="abs t" style="left:266px;top:156.3px;font-size:21px;line-height:24px;color:#6c757d;letter-spacing:0">Filter Date</div>
<div class="abs t" style="left:266.3px;top:190.2px;font-size:13.5px;font-weight:700;color:#212529">Date From</div>
<div class="abs t" style="left:557.3px;top:190.2px;font-size:13.5px;font-weight:700;color:#212529">Date To</div>
<div class="inp abs" style="left:266px"></div><div class="inp abs" style="left:557px"></div>
<div class="abs t" style="left:274.6px;top:220.5px;font-size:12px;color:#50575e;letter-spacing:.08px">2023<span style="margin:0 1px 0 .9px">-</span>02<span style="margin:0 1px 0 .9px">-</span>11</div>
<div class="abs t" style="left:565.6px;top:220.5px;font-size:12px;color:#50575e;letter-spacing:.08px">2023<span style="margin:0 1px 0 .9px">-</span>02<span style="margin:0 1px 0 .9px">-</span>18</div>
<svg class="abs" style="left:523.4px;top:221.6px" width="10" height="11" viewBox="0 0 11 12"><path d="M2.6 .2 V1.6 M8.4 .2 V1.6" stroke="#1b1b1b" stroke-width="1.3"/><rect x=".7" y="1.7" width="9.6" height="9.6" rx="1.2" fill="#fff" stroke="#1b1b1b" stroke-width="1.3"/><rect x=".7" y="1.7" width="9.6" height="2.6" fill="#1b1b1b"/></svg><svg class="abs" style="left:814px;top:221.6px" width="10" height="11" viewBox="0 0 11 12"><path d="M2.6 .2 V1.6 M8.4 .2 V1.6" stroke="#1b1b1b" stroke-width="1.3"/><rect x=".7" y="1.7" width="9.6" height="9.6" rx="1.2" fill="#fff" stroke="#1b1b1b" stroke-width="1.3"/><rect x=".7" y="1.7" width="9.6" height="2.6" fill="#1b1b1b"/></svg>
<div class="abs" style="left:848px;top:215px;width:57px;height:26px;background:linear-gradient(180deg,#1f4064 0%,#12305a 50%,#06204a 100%);border-radius:0"></div>
<svg class="abs" style="left:855px;top:222px" width="15" height="13" viewBox="0 0 15 13"><path d="M.9 .3 H14.1 Q15 .5 14.5 1.3 L9.4 6.6 V12 Q9.3 12.8 8.6 12.5 L6 10.8 Q5.6 10.5 5.6 10 V6.6 L.5 1.3 Q0 .5 .9 .3 Z" fill="#fff"/></svg>
<div class="abs t" style="left:871.7px;top:220.4px;font-size:11.8px;color:#fff;letter-spacing:-.12px">Filter</div>
<div class="abs" style="left:909px;top:215px;width:57px;height:26px;background:#f8f9fa;border:1px solid #dcdfe3;border-radius:0"></div>
<svg class="abs" style="left:917px;top:221.5px" width="13" height="13" viewBox="0 0 13 13"><path d="M3 .4 H8.6 L10 1.8 V4.6 H3 Z" fill="none" stroke="#3f4347" stroke-width="1.3"/><path d="M1.8 4.8 H11.2 Q12.7 4.8 12.7 6.3 V10 H10.2 V8.2 H2.8 V10 H.3 V6.3 Q.3 4.8 1.8 4.8 Z" fill="#3f4347"/><rect x="3" y="8.6" width="7" height="3.8" fill="none" stroke="#3f4347" stroke-width="1.3"/></svg>
<div class="abs t" style="left:932.9px;top:220.4px;font-size:11.8px;color:#444a4f;letter-spacing:-.07px">Print</div>
<!-- cursor -->
<svg class="abs" style="left:474px;top:285px" width="14" height="20" viewBox="0 0 14 20"><path d="M1.6 1.4 V15.8 L5.7 13.1 L7.3 17.3 Q8.4 18.4 9.6 17.2 Q10 16.6 9.8 16.2 L8.2 12.2 L11.9 11.5 Z" fill="#fff" stroke="#444" stroke-width="1" stroke-linejoin="round"/></svg>
<div class="abs t" style="left:231px;width:925px;text-align:center;top:285px;font-size:23.6px;line-height:28px;font-weight:700;color:#212529">Accounting Journal</div>
<div class="abs t" style="left:231px;width:925px;text-align:center;top:320px;font-size:19.9px;line-height:24px;font-weight:700;color:#212529;letter-spacing:-.05px">Trial Balance</div>
<div class="abs t" style="left:231px;width:925px;text-align:center;top:353.6px;font-size:13.4px;color:#212529;letter-spacing:-.06px">Feb 11, 2023 - Feb 18, 2023</div>
<div class="abs" style="left:254px;top:385px;width:878px;height:1px;background:#e9ebee"></div>
<div class="ln abs" style="left:254px;top:400px;width:879px;height:1px"></div>
<div class="ln abs" style="left:606px;top:404px;width:527px;height:1px"></div>
<div class="ln abs" style="left:606px;top:425px;width:527px;height:1px"></div>
<div class="ln abs" style="left:254px;top:429px;width:879px;height:2px"></div>
<div class="ln abs" style="left:606px;top:453px;width:527px;height:1px"></div>
<div class="ln abs" style="left:606px;top:476px;width:527px;height:1px"></div>
<div class="ln abs" style="left:606px;top:498px;width:527px;height:1px"></div>
<div class="ln abs" style="left:254px;top:521px;width:352px;height:1px"></div>
<div class="ln abs" style="left:606px;top:520px;width:527px;height:2px"></div>
<div class="ln abs" style="left:254px;top:544px;width:879px;height:1px"></div>
<div class="ln abs" style="left:254px;top:400px;width:1px;height:145px"></div>
<div class="ln abs" style="left:429px;top:400px;width:1px;height:121px"></div>
<div class="ln abs" style="left:606px;top:400px;width:1px;height:145px"></div>
<div class="ln abs" style="left:869px;top:404px;width:1px;height:22px"></div><div class="ln abs" style="left:869px;top:430px;width:1px;height:115px"></div>
<div class="ln abs" style="left:1000px;top:404px;width:1px;height:22px"></div><div class="ln abs" style="left:1000px;top:430px;width:1px;height:115px"></div>
<div class="ln abs" style="left:1132px;top:400px;width:1px;height:145px"></div>
<div class="tx abs" style="top:408.0px;left:262.6px;font-weight:700;letter-spacing:0.18px">Date</div>
<div class="tx abs" style="top:408.0px;left:437.7px;font-weight:700;letter-spacing:-0.06px">Journal Code</div>
<div class="tx abs" style="top:407.8px;left:614px;letter-spacing:0.13px">Description</div>
<div class="tx abs" style="top:407.8px;left:877.3px;letter-spacing:0.1px">Debit</div>
<div class="tx abs" style="top:407.8px;left:1008.2px;letter-spacing:0.1px">Credit</div>
<div class="tx abs" style="top:469.1px;left:242.3px;width:200px;text-align:center;letter-spacing:-0.2px">Feb 18, 2023</div>
<div class="tx abs" style="top:469.1px;left:437.7px">202302-00001</div>
<div class="tx abs" style="top:434.7px;left:614px;letter-spacing:0.1px">Sample</div>
<div class="tx abs" style="top:457.7px;left:634.9px;letter-spacing:0.05px">Commissions earned</div>
<div class="tx abs" style="top:480.1px;left:634.9px;letter-spacing:0.05px">Commissions earned</div>
<div class="tx abs" style="top:502.7px;left:634.9px;letter-spacing:0.05px">Accounts receivable</div>
<div class="tx abs" style="top:525.9px;left:637.5px;width:200px;text-align:center;font-weight:700">Total</div>
<div class="tx abs" style="top:457.7px;right:60.59999999999991px;letter-spacing:-.35px">5,000</div>
<div class="tx abs" style="top:480.1px;right:60.59999999999991px;letter-spacing:-.35px">3,000</div>
<div class="tx abs" style="top:502.7px;right:191.79999999999995px;letter-spacing:-.35px">8,000</div>
<div class="tx abs" style="top:525.9px;right:191.79999999999995px;font-weight:700">8,000</div>
<div class="tx abs" style="top:525.9px;right:60.59999999999991px;font-weight:700">8,000</div>

<div id="footer" class="abs"></div>
<div class="abs" style="left:217px;top:576px;width:9px;height:56px;background:linear-gradient(90deg,rgba(0,0,0,.13),rgba(0,0,0,0))"></div>
<div class="abs t" style="left:228.6px;top:604.1px;font-size:11.8px;color:#869099"><b style="letter-spacing:.25px">Copyright ©.</b> <span style="letter-spacing:.05px">All rights reserved.</span></div>
<div class="abs t" style="left:1065.8px;top:604.1px;font-size:11.8px;color:#869099"><b style="letter-spacing:.2px">(by: <span style="color:#0b7bf5">admin</span> )</b> v1.0</div>

<div class="abs" style="left:1170px;top:89px;width:15px;height:543px;background:#f1f1f1"></div>
<div class="abs" style="left:1172px;top:159px;width:11px;height:458px;background:#c1c1c1"></div>
<svg class="abs" style="left:1174px;top:94.6px" width="7" height="5" viewBox="0 0 7 5"><path d="M3.5 .6 L6.8 4.4 H.2 Z" fill="#505050"/></svg>
<svg class="abs" style="left:1174px;top:622px" width="7" height="5" viewBox="0 0 7 5"><path d="M3.5 4.4 L6.8 .6 H.2 Z" fill="#505050"/></svg>
<div class="abs" style="left:1153px;top:600px;width:28px;height:27.5px;background:#333"></div>
<div class="abs" style="left:1160.7px;top:608.4px;width:4.5px;height:12.5px;background:#bdbdbd"></div>
<div class="abs" style="left:1168.5px;top:608.4px;width:4.7px;height:12.5px;background:#bdbdbd"></div>

</body>
</html>
